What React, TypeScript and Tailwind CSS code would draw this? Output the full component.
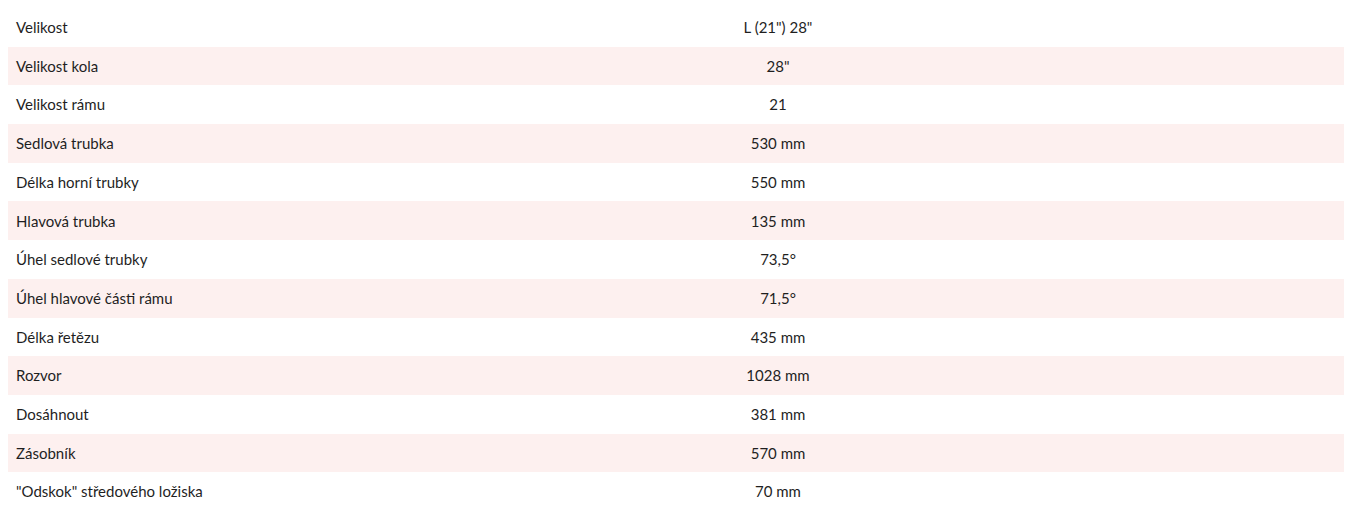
import React from "react";

const rows: [string, string][] = [
  ["Velikost", 'L (21") 28"'],
  ["Velikost kola", '28"'],
  ["Velikost rámu", "21"],
  ["Sedlová trubka", "530 mm"],
  ["Délka horní trubky", "550 mm"],
  ["Hlavová trubka", "135 mm"],
  ["Úhel sedlové trubky", "73,5°"],
  ["Úhel hlavové části rámu", "71,5°"],
  ["Délka řetězu", "435 mm"],
  ["Rozvor", "1028 mm"],
  ["Dosáhnout", "381 mm"],
  ["Zásobník", "570 mm"],
  ['"Odskok" středového ložiska', "70 mm"],
];

const App = () => {
  return (
    <div className="bg-white pl-2 pr-[3px] pt-2 font-['Lato',sans-serif] text-[15px] text-[#1f1f1f]">
      <table className="w-full border-collapse">
        <tbody>
          {rows.map(([label, value], i) => (
            <tr key={label} className={i % 2 === 1 ? "bg-[#fdf0ef]" : ""}>
              <td className="h-[38.7px] w-[204px] px-2 py-0 align-middle">{label}</td>
              <td className="h-[38.7px] px-2 py-0 text-center align-middle">{value}</td>
            </tr>
          ))}
        </tbody>
      </table>
    </div>
  );
};

export default App;
